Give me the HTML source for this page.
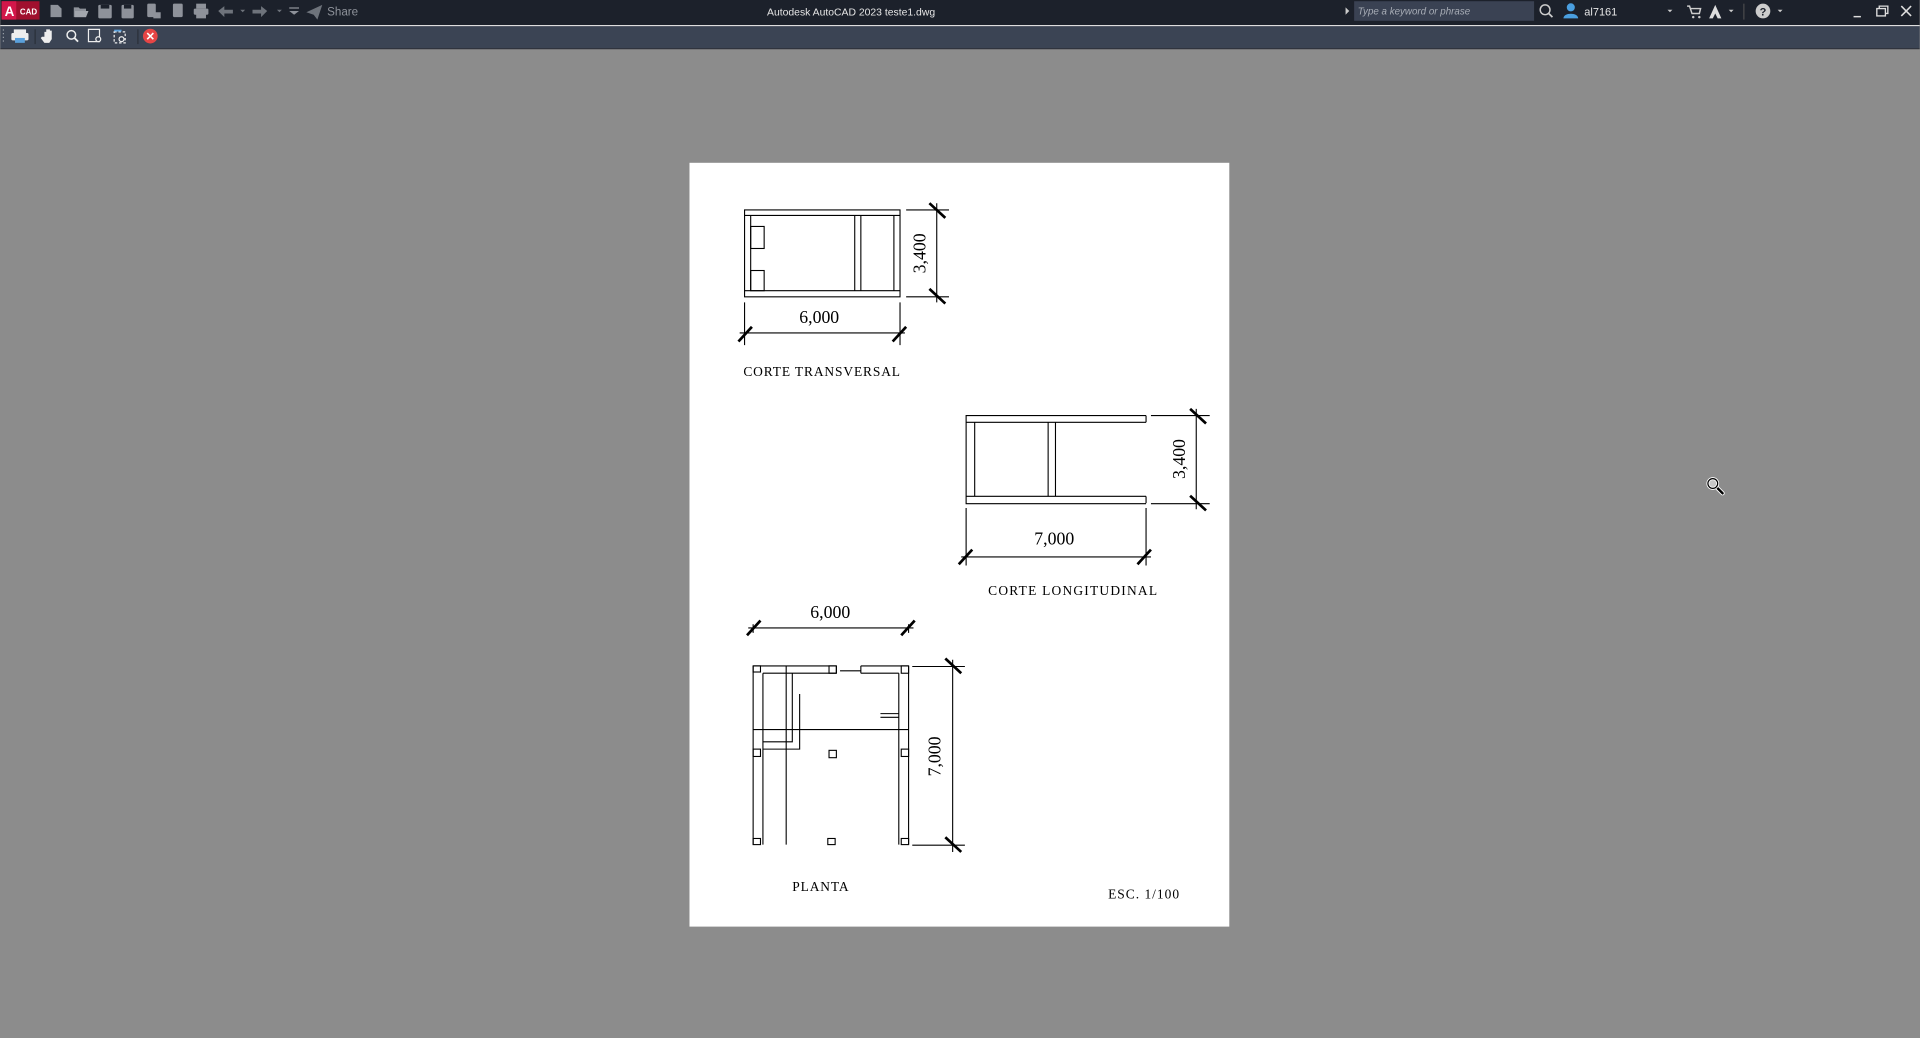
<!DOCTYPE html>
<html><head><meta charset="utf-8"><style>
html,body{margin:0;padding:0;width:1920px;height:1038px;overflow:hidden;background:#8c8c8c}
svg{display:block}
</style></head><body>
<svg width="1920" height="1038" viewBox="0 0 1568 848" xmlns="http://www.w3.org/2000/svg">
<rect width="1568" height="848" fill="#8c8c8c"/>
<rect x="0" y="0" width="1568" height="20.5" fill="#1c212b"/>
<rect x="0" y="20.5" width="1568" height="0.9" fill="#e8e8e8"/>
<rect x="0" y="21.4" width="1568" height="18" fill="#3b4454"/>
<rect x="0" y="39.4" width="1568" height="0.8" fill="#20252e"/>
<rect x="1" y="1" width="31" height="15" fill="#a0102e"/>
<rect x="1" y="1" width="12" height="15" fill="#d3174a"/>
<text x="3.5" y="13" font-family="Liberation Sans,sans-serif" font-weight="bold" font-size="11" fill="#fff">A</text>
<text x="16" y="12" font-family="Liberation Sans,sans-serif" font-weight="bold" font-size="6.5" fill="#fff">CAD</text>
<g fill="#8e929a">
<path d="M41 4h6l3 3v7h-9z"/>
<path d="M60 6h4l1 1h5v7h-10z"/><path d="M61 9h11l-2 5h-9z" fill="#a2a6ad"/>
<rect x="80" y="4" width="11" height="11" rx="1"/><rect x="82" y="4" width="7" height="3" fill="#1c212b"/>
<rect x="99" y="4" width="10" height="11" rx="1"/><rect x="101" y="4" width="6" height="3" fill="#1c212b"/>
<rect x="120" y="3" width="7" height="11" rx="1"/><path d="M125 10h6v5h-6z"/>
<rect x="141" y="3" width="8" height="11" rx="1"/>
<rect x="160" y="3" width="8" height="4"/><rect x="158" y="7" width="12" height="5" rx="1"/><rect x="160" y="11" width="8" height="4"/>
<path d="M178 9l5-4v3h7v3h-7v3z" fill="#6e737b"/><path d="M196 8l2 2 2-2z" fill="#6e737b"/>
<path d="M218 9l-5-4v3h-7v3h7v3z" fill="#6e737b"/><path d="M226 8l2 2 2-2z" fill="#6e737b"/>
<path d="M236 6h8v1h-8zM236 9l4 3 4-3z"/>
<path d="M250 10l13-6-4 12-3-4z" fill="#6e737b"/>
</g>
<text x="267" y="12.5" font-family="Liberation Sans,sans-serif" font-size="9.5" fill="#8e929a">Share</text>
<text x="695" y="12.5" font-family="Liberation Sans,sans-serif" font-size="8.5" fill="#e6e6e6" text-anchor="middle">Autodesk AutoCAD 2023    teste1.dwg</text>
<path d="M1099 6l3 3-3 3z" fill="#ccc"/>
<rect x="1106" y="1" width="147" height="16" fill="#3a4253"/>
<text x="1109" y="12" font-family="Liberation Sans,sans-serif" font-style="italic" font-size="8" fill="#a8adb6">Type a keyword or phrase</text>
<circle cx="1262" cy="8" r="4" fill="none" stroke="#ccc" stroke-width="1.2"/><path d="M1265 11l3 3" stroke="#ccc" stroke-width="1.4"/>
<circle cx="1283" cy="6" r="3.3" fill="#4a9fe0"/><path d="M1277 15c0-5 12-5 12 0z" fill="#4a9fe0"/>
<text x="1294" y="12.5" font-family="Liberation Sans,sans-serif" font-size="9" fill="#e6e6e6">al7161</text>
<path d="M1362 8l2 2 2-2z" fill="#ccc"/>
<path d="M1378 5h2l2 6h6l1-4h-8" fill="none" stroke="#ccc" stroke-width="1.2"/><circle cx="1383" cy="14" r="1" fill="#ccc"/><circle cx="1388" cy="14" r="1" fill="#ccc"/>
<path d="M1396 15l5-11 5 11h-3l-2-4-2 4z" fill="#ddd"/><path d="M1412 8l2 2 2-2z" fill="#ccc"/>
<rect x="1424" y="3" width="0.8" height="13" fill="#555"/>
<circle cx="1440" cy="9" r="6" fill="#ccc"/><text x="1440" y="12.5" font-family="Liberation Sans,sans-serif" font-weight="bold" font-size="9" fill="#1c212b" text-anchor="middle">?</text>
<path d="M1452 8l2 2 2-2z" fill="#ccc"/>
<rect x="1514" y="13" width="6" height="1.2" fill="#ddd"/>
<rect x="1533" y="7" width="7" height="6" fill="none" stroke="#ddd" stroke-width="1.1"/><path d="M1535 7v-2h7v6h-2" fill="none" stroke="#ddd" stroke-width="1.1"/>
<path d="M1553 5l8 8M1561 5l-8 8" stroke="#ddd" stroke-width="1.3"/>
<g fill="#9aa0a8"><rect x="2" y="24" width="1" height="1"/><rect x="2" y="27" width="1" height="1"/><rect x="2" y="30" width="1" height="1"/><rect x="2" y="33" width="1" height="1"/></g>
<rect x="11" y="24" width="10" height="4" fill="#eee"/><rect x="9" y="27" width="14" height="6" rx="1" fill="#eee"/><rect x="12" y="31" width="8" height="4" fill="#5aa0dc"/>
<rect x="28" y="24" width="0.8" height="12" fill="#262b33"/>
<path d="M36 30v-4h1.5v4v-6h1.5v6v-6h1.5v6v-5h1.5v7l-2 3h-4l-3-4 1-1z" fill="#eee"/>
<circle cx="58" cy="28.5" r="3.5" fill="none" stroke="#eee" stroke-width="1.2"/><path d="M60.5 31l3 3" stroke="#eee" stroke-width="1.5"/>
<rect x="72" y="24" width="9" height="10" fill="none" stroke="#eee" stroke-width="1"/><circle cx="80" cy="32" r="2" fill="#3b4454" stroke="#eee" stroke-width="1"/>
<rect x="93" y="26" width="9" height="9" fill="none" stroke="#eee" stroke-width="1" stroke-dasharray="2 1.5"/><path d="M93 25h6" stroke="#5aa0dc" stroke-width="1.5"/><circle cx="99" cy="32" r="2" fill="#3b4454" stroke="#eee" stroke-width="1"/>
<rect x="112" y="24" width="0.8" height="12" fill="#262b33"/>
<circle cx="122.5" cy="29.5" r="6" fill="#e64545"/><path d="M120 27l5 5M125 27l-5 5" stroke="#fff" stroke-width="1.3"/>
<rect x="563" y="133" width="441" height="624" fill="#fff"/>
<g fill="none" stroke="#000" stroke-width="0.9">
<rect x="608" y="171.5" width="127" height="71"/>
<path d="M608 176h127M608 237.5h127M613 176v61.5M730 176v61.5M698 176v61.5M703 176v61.5"/>
<rect x="613" y="185" width="11" height="18"/><rect x="613" y="221" width="11" height="16.5"/>
<path d="M740 171.5h35M740 242.5h35M765 166v81"/>
<path d="M608 247v35M735 247v35M604 272h135"/>
<path d="M936 339.5h-147v72h147M789 345h147M789 405.5h147M936 339.5v5.5M936 405.5v5.5M796 345v60.5M856 345v60.5M862 345v60.5"/>
<path d="M940 339.5h48M940 411.5h48M977 334v82"/>
<path d="M789 415v47M936 415v47M785 455h155"/>
<path d="M615 517v-7M742 517v-7M611 513h135"/>
<path d="M615 544v146M623 550v140M742 544v146M734 550v140M615 544h68M703 544h39M623 550h19M642 550h41M703 550h31M683 544v6M703 544v6M686 548h17"/>
<path d="M642 544v146M615 596h127"/>
<path d="M647 550v56h-24M653 567v45h-30"/>
<path d="M719 583h15M719 586h15"/>
<rect x="615" y="544" width="6" height="5"/><rect x="677" y="544" width="6" height="6"/><rect x="736" y="544" width="6" height="6"/>
<rect x="615" y="612" width="6" height="6"/><rect x="677" y="613" width="6" height="6"/><rect x="736" y="612" width="6" height="6"/>
<rect x="615" y="685" width="6" height="5"/><rect x="676" y="685" width="6" height="5"/><rect x="736" y="685" width="6" height="5"/>
<path d="M745 544.5h43M745 690.5h43M778 539v157"/>
</g>
<g stroke="#000" stroke-width="2.2">
<path d="M759 166l13 12M759 236l13 12M603 279l11-12M729 279l11-12"/>
<path d="M972 334l13 12M972 405l13 12M783 461l11-12M929 461l11-12"/>
<path d="M610 519l11-12M736 519l11-12M772 538l13 12M772 684l13 12"/>
</g>
<g font-family="Liberation Serif,serif" fill="#000">
<text x="669" y="264" font-size="14.5" text-anchor="middle">6,000</text>
<text transform="translate(756,207) rotate(-90)" font-size="14.5" text-anchor="middle">3,400</text>
<text x="607" y="307" font-size="11" textLength="128" lengthAdjust="spacing">CORTE TRANSVERSAL</text>
<text x="861" y="445" font-size="14.5" text-anchor="middle">7,000</text>
<text transform="translate(968,375) rotate(-90)" font-size="14.5" text-anchor="middle">3,400</text>
<text x="807" y="486" font-size="11" textLength="138" lengthAdjust="spacing">CORTE LONGITUDINAL</text>
<text x="678" y="505" font-size="14.5" text-anchor="middle">6,000</text>
<text transform="translate(768,618) rotate(-90)" font-size="14.5" text-anchor="middle">7,000</text>
<text x="647" y="728" font-size="11" textLength="46" lengthAdjust="spacing">PLANTA</text>
<text x="905" y="734" font-size="11" textLength="58" lengthAdjust="spacing">ESC. 1/100</text>
</g>
<path d="M1402 398l5 5" stroke="#fff" stroke-width="3.5" stroke-linecap="round"/>
<path d="M1402 398l5 5" stroke="#000" stroke-width="2" stroke-linecap="round"/>
<circle cx="1399" cy="395" r="4" fill="#c8c8c8" stroke="#fff" stroke-width="2.4"/>
<circle cx="1399" cy="395" r="4" fill="none" stroke="#000" stroke-width="1"/>
</svg>
</body></html>
